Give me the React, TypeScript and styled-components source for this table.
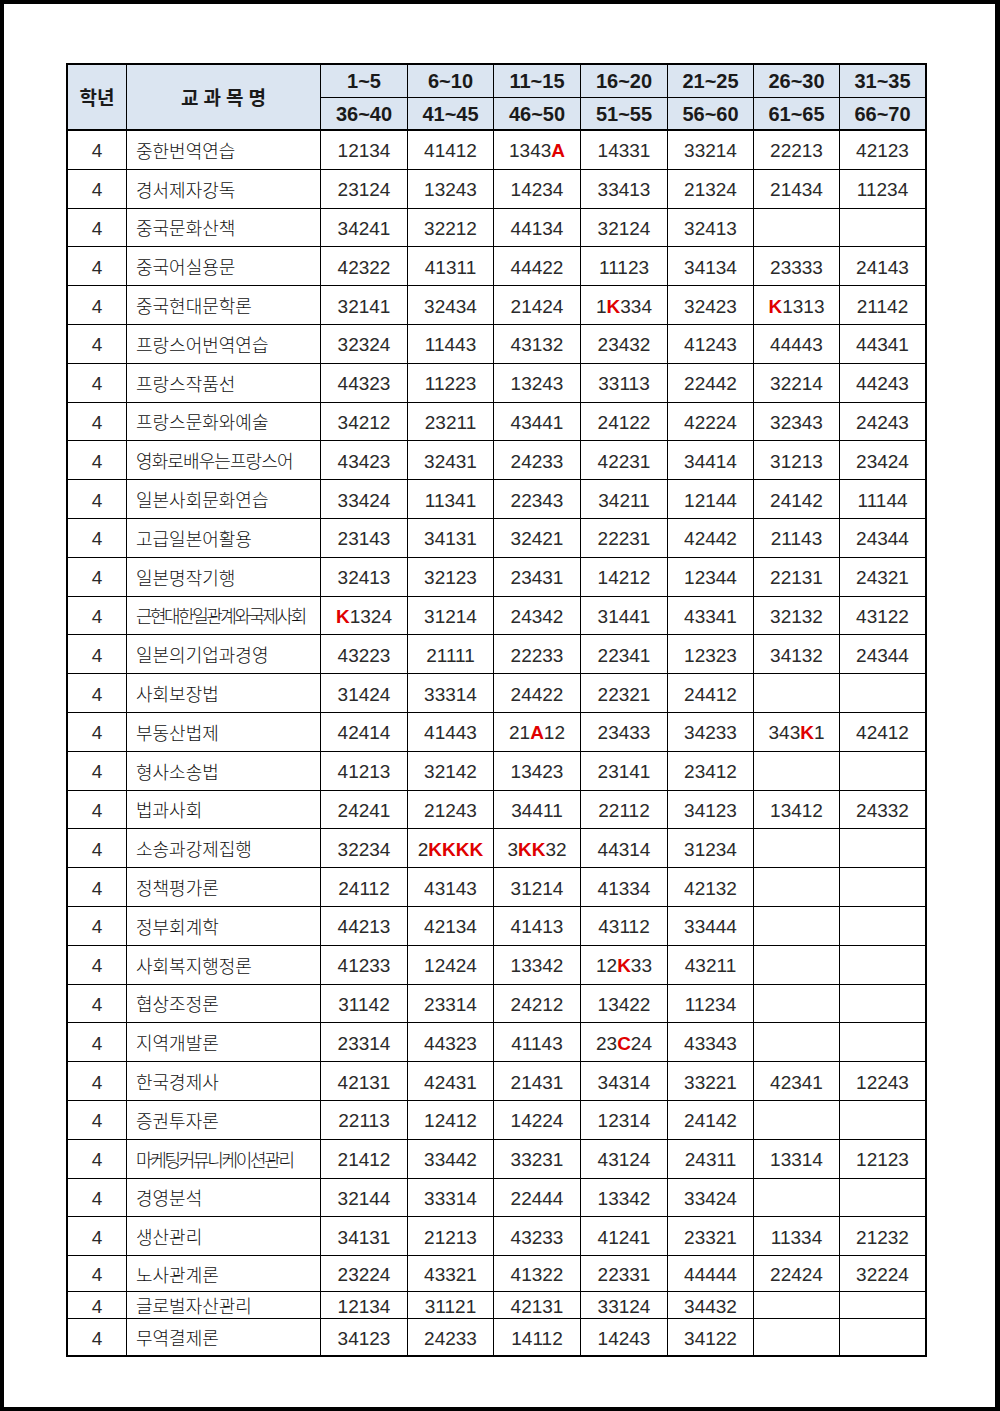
import React from 'react';
import styled, { createGlobalStyle } from 'styled-components';

type Row = {
  name: string;
  codes: string[];
  squeeze?: number;
  height?: number;
};

const ranges: [string, string][] = [
  ['1~5', '36~40'],
  ['6~10', '41~45'],
  ['11~15', '46~50'],
  ['16~20', '51~55'],
  ['21~25', '56~60'],
  ['26~30', '61~65'],
  ['31~35', '66~70'],
];

const colWidths = [59, 194, 87, 86, 87, 87, 86, 86, 85];

const rows: Row[] = [
  { name: '중한번역연습', codes: ['12134', '41412', '1343A', '14331', '33214', '22213', '42123'] },
  { name: '경서제자강독', codes: ['23124', '13243', '14234', '33413', '21324', '21434', '11234'] },
  { name: '중국문화산책', codes: ['34241', '32212', '44134', '32124', '32413'] },
  { name: '중국어실용문', codes: ['42322', '41311', '44422', '11123', '34134', '23333', '24143'] },
  { name: '중국현대문학론', codes: ['32141', '32434', '21424', '1K334', '32423', 'K1313', '21142'] },
  { name: '프랑스어번역연습', codes: ['32324', '11443', '43132', '23432', '41243', '44443', '44341'] },
  { name: '프랑스작품선', codes: ['44323', '11223', '13243', '33113', '22442', '32214', '44243'] },
  { name: '프랑스문화와예술', codes: ['34212', '23211', '43441', '24122', '42224', '32343', '24243'] },
  { name: '영화로배우는프랑스어', squeeze: -0.9, codes: ['43423', '32431', '24233', '42231', '34414', '31213', '23424'] },
  { name: '일본사회문화연습', codes: ['33424', '11341', '22343', '34211', '12144', '24142', '11144'] },
  { name: '고급일본어활용', codes: ['23143', '34131', '32421', '22231', '42442', '21143', '24344'] },
  { name: '일본명작기행', codes: ['32413', '32123', '23431', '14212', '12344', '22131', '24321'] },
  { name: '근현대한일관계와국제사회', squeeze: -2.5, codes: ['K1324', '31214', '24342', '31441', '43341', '32132', '43122'] },
  { name: '일본의기업과경영', codes: ['43223', '21111', '22233', '22341', '12323', '34132', '24344'] },
  { name: '사회보장법', codes: ['31424', '33314', '24422', '22321', '24412'] },
  { name: '부동산법제', codes: ['42414', '41443', '21A12', '23433', '34233', '343K1', '42412'] },
  { name: '형사소송법', codes: ['41213', '32142', '13423', '23141', '23412'] },
  { name: '법과사회', codes: ['24241', '21243', '34411', '22112', '34123', '13412', '24332'] },
  { name: '소송과강제집행', codes: ['32234', '2KKKK', '3KK32', '44314', '31234'] },
  { name: '정책평가론', codes: ['24112', '43143', '31214', '41334', '42132'] },
  { name: '정부회계학', codes: ['44213', '42134', '41413', '43112', '33444'] },
  { name: '사회복지행정론', codes: ['41233', '12424', '13342', '12K33', '43211'] },
  { name: '협상조정론', codes: ['31142', '23314', '24212', '13422', '11234'] },
  { name: '지역개발론', codes: ['23314', '44323', '41143', '23C24', '43343'] },
  { name: '한국경제사', codes: ['42131', '42431', '21431', '34314', '33221', '42341', '12243'] },
  { name: '증권투자론', codes: ['22113', '12412', '14224', '12314', '24142'] },
  { name: '마케팅커뮤니케이션관리', squeeze: -2.3, codes: ['21412', '33442', '33231', '43124', '24311', '13314', '12123'] },
  { name: '경영분석', codes: ['32144', '33314', '22444', '13342', '33424'] },
  { name: '생산관리', codes: ['34131', '21213', '43233', '41241', '23321', '11334', '21232'] },
  { name: '노사관계론', height: 36, codes: ['23224', '43321', '41322', '22331', '44444', '22424', '32224'] },
  { name: '글로벌자산관리', height: 27, codes: ['12134', '31121', '42131', '33124', '34432'] },
  { name: '무역결제론', height: 36, codes: ['34123', '24233', '14112', '14243', '34122'] },
];

const GlobalStyle = createGlobalStyle`
  html, body {
    margin: 0;
    padding: 0;
    background: #fff;
  }
  body {
    font-family: "Liberation Sans", "Noto Sans CJK KR", sans-serif;
    color: #000;
  }
`;

const Sheet = styled.div`
  width: 1000px;
  height: 1411px;
  box-sizing: border-box;
  border: 4px solid #000;
  border-right-width: 5px;
  padding: 59px 0 0 62px;
  background: #fff;
`;

const Table = styled.table`
  width: 860px;
  table-layout: fixed;
  border-collapse: separate;
  border-spacing: 0;
  border: 2px solid #000;
  box-sizing: border-box;
`;

const Col = styled.col<{ $w: number }>`
  width: ${({ $w }) => $w}px;
`;

const HeadCell = styled.th<{ $last?: boolean; $bottom?: boolean }>`
  box-sizing: border-box;
  height: 33px;
  padding: 0;
  background: #dbe5f1;
  border-right: ${({ $last }) => ($last ? '0' : '1px solid #000')};
  border-bottom: ${({ $bottom }) => ($bottom ? '2px solid #000' : '1px solid #000')};
  font-family: "Liberation Sans", "Noto Sans CJK KR", sans-serif;
  font-size: 20px;
  font-weight: 700;
  color: #1a1a1a;
  text-align: center;
  vertical-align: middle;
  line-height: 1;
`;

const TitleLabel = styled.span<{ $spacing?: number }>`
  font-family: "Noto Sans CJK KR", sans-serif;
  font-size: 19px;
  font-weight: 700;
  letter-spacing: ${({ $spacing }) => $spacing ?? 0}px;
  margin-right: ${({ $spacing }) => -($spacing ?? 0)}px;
`;

const BodyRow = styled.tr<{ $h: number }>`
  height: ${({ $h }) => $h}px;
`;

const Cell = styled.td<{ $last?: boolean; $end?: boolean }>`
  box-sizing: border-box;
  padding: 0;
  border-right: ${({ $last }) => ($last ? '0' : '1px solid #000')};
  border-bottom: ${({ $end }) => ($end ? '0' : '1px solid #000')};
  vertical-align: middle;
  line-height: 1;
  white-space: nowrap;
  overflow: hidden;
`;

const GradeCell = styled(Cell)`
  text-align: center;
  font-size: 19px;
  color: #2a2a2a;
  padding-top: 2px;
`;

const NameCell = styled(Cell)<{ $squeeze?: number }>`
  padding-left: 9px;
  font-family: "Noto Sans CJK KR", sans-serif;
  font-size: 18px;
  font-weight: 300;
  color: #111;
  letter-spacing: ${({ $squeeze }) => $squeeze ?? 0}px;
`;

const CodeCell = styled(Cell)`
  text-align: center;
  font-size: 19px;
  color: #2a2a2a;
  padding-top: 2px;
`;

const Mark = styled.span`
  color: #e00000;
  font-weight: 700;
`;

const Code = ({ value }: { value: string }): JSX.Element => (
  <>
    {value.split('').map((ch, i) =>
      /[A-Z]/.test(ch) ? <Mark key={i}>{ch}</Mark> : <React.Fragment key={i}>{ch}</React.Fragment>
    )}
  </>
);

const App = (): JSX.Element => {
  return (
    <>
      <GlobalStyle />
      <Sheet>
        <Table>
          <colgroup>
            {colWidths.map((w, i) => (
              <Col key={i} $w={w} />
            ))}
          </colgroup>
          <thead>
            <tr>
              <HeadCell rowSpan={2} $bottom>
                <TitleLabel>학년</TitleLabel>
              </HeadCell>
              <HeadCell rowSpan={2} $bottom>
                <TitleLabel $spacing={5}>교과목명</TitleLabel>
              </HeadCell>
              {ranges.map(([top], i) => (
                <HeadCell key={top} $last={i === ranges.length - 1}>
                  {top}
                </HeadCell>
              ))}
            </tr>
            <tr>
              {ranges.map(([, bottom], i) => (
                <HeadCell key={bottom} $bottom $last={i === ranges.length - 1}>
                  {bottom}
                </HeadCell>
              ))}
            </tr>
          </thead>
          <tbody>
            {rows.map((row, r) => {
              const end = r === rows.length - 1;
              return (
                <BodyRow key={row.name} $h={row.height ?? 38.8}>
                  <GradeCell $end={end}>4</GradeCell>
                  <NameCell $end={end} $squeeze={row.squeeze}>
                    {row.name}
                  </NameCell>
                  {ranges.map((_, c) => (
                    <CodeCell key={c} $end={end} $last={c === ranges.length - 1}>
                      {row.codes[c] ? <Code value={row.codes[c]} /> : null}
                    </CodeCell>
                  ))}
                </BodyRow>
              );
            })}
          </tbody>
        </Table>
      </Sheet>
    </>
  );
};

export default App;
